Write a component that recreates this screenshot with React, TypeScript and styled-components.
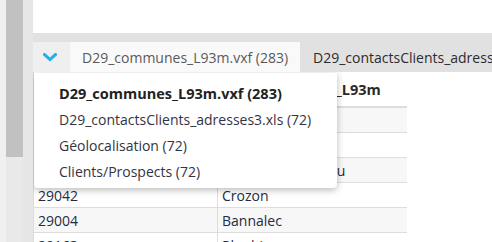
import React from 'react';
import styled, { createGlobalStyle } from 'styled-components';

const GlobalStyle = createGlobalStyle`
  html, body {
    margin: 0;
    padding: 0;
    background: #ffffff;
    font-family: "Open Sans", "Noto Sans", sans-serif;
  }
`;

const Page = styled.div`
  display: flex;
  width: 492px;
  height: 242px;
  overflow: hidden;
`;

const LeftEdge = styled.div`
  width: 6px;
  flex-shrink: 0;
  background: #f0f0f0;
`;

const ScrollTrack = styled.div`
  width: 17px;
  flex-shrink: 0;
  background: #e9e9e9;
  display: flex;
  flex-direction: column;
`;

const ScrollThumb = styled.div`
  height: 157px;
  background: #c1c1c1;
`;

const Gutter = styled.div`
  width: 10px;
  flex-shrink: 0;
  background: #e6e6e6;
`;

const Main = styled.div`
  flex: 1;
  display: flex;
  flex-direction: column;
  min-width: 0;
`;

const TopPane = styled.div`
  height: 33px;
  flex-shrink: 0;
  background: #ffffff;
`;

const Band = styled.div`
  height: 9px;
  flex-shrink: 0;
  background: #e1e1e1;
`;

const TabBar = styled.div`
  height: 30px;
  flex-shrink: 0;
  display: flex;
  overflow: hidden;
  background: #e1e1e1;
  white-space: nowrap;
`;

const MenuButton = styled.div`
  width: 37px;
  flex-shrink: 0;
  display: flex;
  align-items: center;
  justify-content: center;
  background: #efefef;
  padding-right: 4px;
  box-sizing: border-box;
`;

const Tab = styled.div<{ $active?: boolean }>`
  display: flex;
  flex-shrink: 0;
  align-items: center;
  padding: 0 0 0 ${p => (p.$active ? '12px' : '13px')};
  width: ${p => (p.$active ? '230px' : 'auto')};
  box-sizing: border-box;
  background: ${p => (p.$active ? '#f9f9f9' : 'transparent')};
  color: ${p => (p.$active ? '#5a5a5a' : '#2c2c2c')};
  font-size: 14px;
`;

const Body = styled.div`
  position: relative;
  flex: 1;
  min-height: 0;
  overflow: hidden;
  background: #ffffff;
`;

const Table = styled.div`
  width: 374px;
  border-left: 1px solid #dddddd;
  box-sizing: border-box;
`;

const HeaderRow = styled.div`
  display: grid;
  grid-template-columns: 183px 1fr;
  height: 34px;
  border-bottom: 2px solid #dddddd;
  align-items: center;
  font-weight: 700;
  font-size: 14.5px;
  color: #2a2a2a;
`;

const Row = styled.div<{ $striped?: boolean }>`
  display: grid;
  grid-template-columns: 183px 1fr;
  height: 24px;
  border-bottom: 1px solid #dddddd;
  background: ${p => (p.$striped ? '#f7f7f7' : '#ffffff')};
  font-size: 14px;
  color: #222c44;
`;

const Cell = styled.div<{ $first?: boolean }>`
  display: flex;
  align-items: center;
  padding-left: 4px;
  border-left: ${p => (p.$first ? 'none' : '1px solid #dddddd')};
  white-space: nowrap;
  overflow: hidden;
`;

const Dropdown = styled.div`
  position: absolute;
  top: 1px;
  left: 1px;
  width: 303px;
  height: 115px;
  box-sizing: border-box;
  padding: 7px 0 0 25px;
  background: #ffffff;
  border-radius: 0 0 4px 4px;
  box-shadow: 0 2px 7px rgba(0, 0, 0, 0.28);
`;

const Item = styled.div<{ $selected?: boolean }>`
  height: 26px;
  display: flex;
  align-items: center;
  font-size: ${p => (p.$selected ? '14.5px' : '14px')};
  font-weight: ${p => (p.$selected ? 700 : 400)};
  color: ${p => (p.$selected ? '#222222' : '#333344')};
  white-space: nowrap;
`;

const rows = [
  { code: '29019', name: 'Brest', striped: true },
  { code: '29232', name: 'Quimper', striped: false },
  { code: '29101', name: 'Lampaul-Guimiliau', striped: true },
  { code: '29042', name: 'Crozon', striped: false },
  { code: '29004', name: 'Bannalec', striped: true },
  { code: '29163', name: 'Plouhinec', striped: false },
];

const items = [
  'D29_communes_L93m.vxf (283)',
  'D29_contactsClients_adresses3.xls (72)',
  'Géolocalisation (72)',
  'Clients/Prospects (72)',
];

const Chevron = () => (
  <svg width="14" height="9" viewBox="0 0 14 9">
    <path d="M1.5 1.5 L7 6.5 L12.5 1.5" fill="none" stroke="#1eaee8" strokeWidth="3" strokeLinecap="square" />
  </svg>
);

export default function App() {
  return (
    <Page>
      <GlobalStyle />
      <LeftEdge />
      <ScrollTrack>
        <ScrollThumb />
      </ScrollTrack>
      <Gutter />
      <Main>
        <TopPane />
        <Band />
        <TabBar>
          <MenuButton>
            <Chevron />
          </MenuButton>
          <Tab $active>D29_communes_L93m.vxf (283)</Tab>
          <Tab>D29_contactsClients_adresses3.xls (72)</Tab>
        </TabBar>
        <Body>
          <Table>
            <HeaderRow>
              <Cell $first>INSEE_COM</Cell>
              <Cell>NOM_COMMUN_L93m</Cell>
            </HeaderRow>
            {rows.map(r => (
              <Row key={r.code} $striped={r.striped}>
                <Cell $first>{r.code}</Cell>
                <Cell>{r.name}</Cell>
              </Row>
            ))}
          </Table>
          <Dropdown>
            {items.map((it, i) => (
              <Item key={it} $selected={i === 0}>
                {it}
              </Item>
            ))}
          </Dropdown>
        </Body>
      </Main>
    </Page>
  );
}
